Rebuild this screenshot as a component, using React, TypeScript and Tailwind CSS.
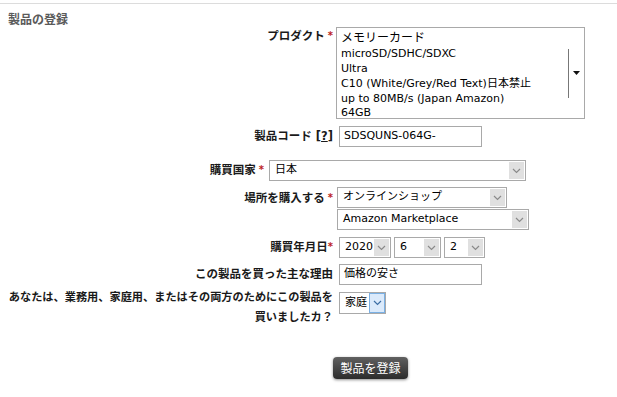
const label = "shrink-0 text-right text-[11.5px] font-bold text-[#1a1a1a] font-['DejaVu_Sans','Noto_Sans_CJK_JP',sans-serif]";
const longLabel = "shrink-0 whitespace-nowrap text-right text-[11.2px] leading-[20px] font-bold text-[#1a1a1a] font-['DejaVu_Sans','Noto_Sans_CJK_JP',sans-serif]";
const field = "text-[11px] text-black font-['DejaVu_Sans','Noto_Sans_CJK_JP',sans-serif]";

function Chevron({ color = '#8a8a8a' }: { color?: string }) {
  return (
    <svg width="9" height="6" viewBox="0 0 9 6" fill="none">
      <path d="M1 1l3.5 3.5L8 1" stroke={color} strokeWidth="1.2" />
    </svg>
  );
}

function Req() {
  return <span className="ml-[3px] align-top text-[10px] text-[#b22]">*</span>;
}

interface SelectProps {
  value: string;
  className: string;
  hover?: boolean;
}

function Select({ value, className, hover }: SelectProps) {
  return (
    <div className={`flex border border-[#a9a9a9] bg-white ${className}`}>
      <span className={`flex flex-1 items-center pl-[5px] ${field}`}>{value}</span>
      {hover ? (
        <span className="flex w-[16px] items-center justify-center border border-[#7ab0e4] bg-[#dbeafb]">
          <Chevron color="#3b6ea5" />
        </span>
      ) : (
        <span className="m-px flex w-[15px] items-center justify-center bg-[#e0e0e0]">
          <Chevron />
        </span>
      )}
    </div>
  );
}

function TextBox({ value }: { value: string }) {
  return (
    <div className={`flex h-[21px] w-[143px] items-center border border-[#a9a9a9] bg-white pl-[4px] ${field}`}>
      {value}
    </div>
  );
}

export default function App() {
  return (
    <div className="h-[397px] w-[617px] overflow-hidden bg-white pt-[3px]">
      <div className="h-px bg-[#dcdcdc]" />
      <div className="pl-2 pt-[7px] text-[12px] leading-4 font-bold text-[#5a5a5a] font-['Noto_Sans_CJK_JP',sans-serif]">
        製品の登録
      </div>

      {/* プロダクト */}
      <div className="flex items-start">
        <div className={`w-[333px] pt-[1px] ${label}`}>
          プロダクト<Req />
        </div>
        <div className="ml-[3px] flex h-[92px] w-[249px] border border-[#a9a9a9] bg-white">
          <div className={`flex-1 pl-[4px] pt-[3px] leading-[15px] ${field}`}>
            <div className="text-[12px]">メモリーカード</div>
            <div>microSD/SDHC/SDXC</div>
            <div>Ultra</div>
            <div>C10 (White/Grey/Red Text)日本禁止</div>
            <div>up to 80MB/s (Japan Amazon)</div>
            <div className="-mt-px">64GB</div>
          </div>
          <div className="h-[49px] w-px self-center bg-[#777]" />
          <div className="flex w-[15px] items-center justify-center">
            <svg width="7" height="4" viewBox="0 0 7 4">
              <path d="M0 0h7L3.5 4z" fill="#111" />
            </svg>
          </div>
        </div>
      </div>

      {/* 製品コード */}
      <div className="mt-[7px] flex items-center">
        <div className={`w-[333px] ${label}`}>
          製品コード [<span className="underline">?</span>]
        </div>
        <div className="ml-[6px]">
          <TextBox value="SDSQUNS-064G-" />
        </div>
      </div>

      {/* 購買国家 */}
      <div className="mt-[13px] flex items-center">
        <div className={`w-[264px] ${label}`}>
          購買国家<Req />
        </div>
        <Select value="日本" className="ml-[5px] h-[21px] w-[257px]" />
      </div>

      {/* 場所を購入する */}
      <div className="mt-[6px] flex items-start">
        <div className={`w-[333px] pt-[3px] ${label}`}>
          場所を購入する<Req />
        </div>
        <div className="ml-[4px] flex flex-col gap-px">
          <Select value="オンラインショップ" className="h-[21px] w-[170px]" />
          <Select value="Amazon Marketplace" className="h-[21px] w-[192px]" />
        </div>
      </div>

      {/* 購買年月日 */}
      <div className="mt-[7px] flex items-center">
        <div className={`w-[333px] ${label}`}>
          購買年月日<span className="align-top text-[10px] text-[#b22]">*</span>
        </div>
        <div className="ml-[6px] flex gap-[3px]">
          <Select value="2020" className="h-[21px] w-[52px]" />
          <Select value="6" className="h-[21px] w-[47px]" />
          <Select value="2" className="h-[21px] w-[41px]" />
        </div>
      </div>

      {/* 理由 */}
      <div className="mt-[6px] flex items-center">
        <div className={`w-[333px] ${label}`}>この製品を買った主な理由</div>
        <div className="ml-[6px]">
          <TextBox value="価格の安さ" />
        </div>
      </div>

      {/* 用途 */}
      <div className="mt-[3px] flex items-start">
        <div className={`w-[333px] ${longLabel}`}>
          あなたは、業務用、家庭用、またはその両方のためにこの製品を
          <br />
          買いましたカ？
        </div>
        <Select value="家庭" hover className="ml-[6px] mt-[4px] h-[22px] w-[47px]" />
      </div>

      <div className="mt-[27px] pl-[333px]">
        <button className="h-[22px] w-[75px] rounded-[4px] bg-linear-to-b from-[#606060] to-[#2c2c2c] text-[12px] text-white shadow-[0_1px_3px_rgba(0,0,0,0.45)] font-['Noto_Sans_CJK_JP',sans-serif]">
          製品を登録
        </button>
      </div>
    </div>
  );
}
